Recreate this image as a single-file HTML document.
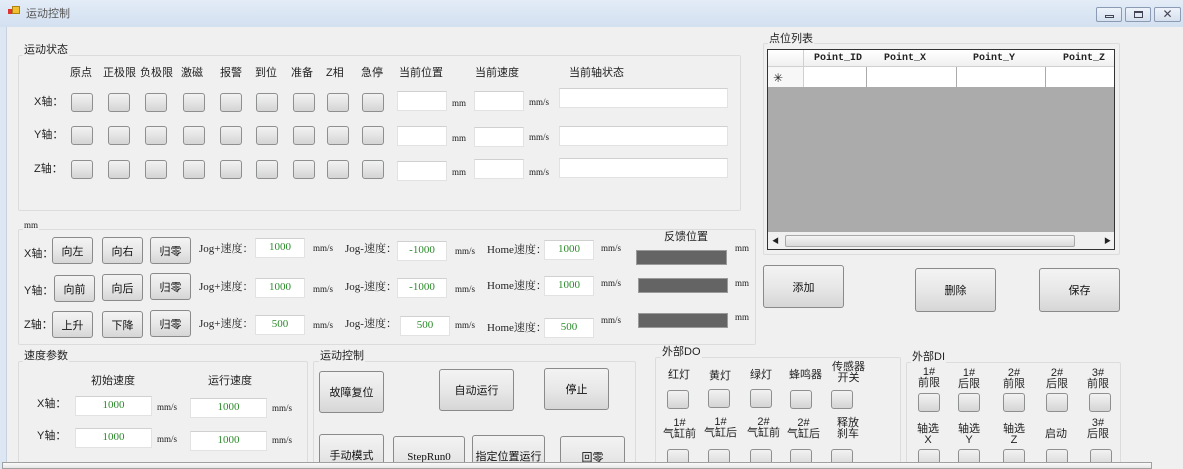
<!DOCTYPE html>
<html><head><meta charset="utf-8">
<style>
*{margin:0;padding:0;box-sizing:border-box}
html{width:1183px;height:469px;overflow:hidden}
body{width:1183px;height:469px;overflow:hidden;background:#f0f0f0;position:relative;font-family:"Liberation Serif","Noto Serif CJK SC","Noto Sans CJK SC",serif;font-size:11px;color:#222}
.a{position:absolute;white-space:nowrap;line-height:12px}
.cj{font-family:"Liberation Sans","Noto Sans CJK SC",sans-serif;font-size:11px}
.sb{position:absolute;width:22px;height:19px;border:1px solid #8e8f8f;border-radius:3px;background:linear-gradient(#f2f2f2,#e4e4e4 50%,#d4d4d4)}
.bt{position:absolute;border:1px solid #8a8a8a;border-radius:3px;background:linear-gradient(#f3f3f3,#e8e8e8 50%,#d6d6d6);display:flex;align-items:center;justify-content:center;font-family:"Liberation Sans","Noto Sans CJK SC",sans-serif;font-size:11px;color:#111}
.tb{position:absolute;background:#fff;border:1px solid #e2e2e2;border-top-color:#d0d0d0;height:20px;color:#2a8a2a;text-align:center;line-height:16px;font-size:11px}
.gb{position:absolute;border:1px solid #dcdcdc;border-radius:2px}
.gl{position:absolute;background:#f0f0f0;padding:0 1px;font-family:"Liberation Sans","Noto Sans CJK SC",sans-serif;font-size:11px;line-height:12px}
.bar{position:absolute;background:#646464;border:1px solid #9a9a9a;height:15px}
.u{font-size:9px}
.c2{text-align:center;line-height:11px}
</style></head><body>
<div style="position:absolute;left:0;top:0;width:1183px;height:27px;background:linear-gradient(#e3ecf7,#d3e0f0)"></div>
<div style="position:absolute;left:8px;top:9px;width:6px;height:5px;background:#d33"></div>
<div style="position:absolute;left:12px;top:6px;width:8px;height:8px;background:#f0c030;border:1px solid #b08010"></div>
<div class="a cj" style="left:26px;top:8px;color:#555;font-size:11px">运动控制</div>
<div style="position:absolute;left:1096px;top:7px;width:26px;height:15px;border:1px solid #8b9bb4;border-radius:2px;background:linear-gradient(#eef3fa,#d6e0ee)"><div style="position:absolute;left:8px;top:7px;width:9px;height:3px;border:1px solid #445"></div></div>
<div style="position:absolute;left:1125px;top:7px;width:26px;height:15px;border:1px solid #8b9bb4;border-radius:2px;background:linear-gradient(#eef3fa,#d6e0ee)"><div style="position:absolute;left:8px;top:3px;width:9px;height:7px;border:1px solid #445;border-top-width:2px"></div></div>
<div style="position:absolute;left:1154px;top:7px;width:27px;height:15px;border:1px solid #8b9bb4;border-radius:2px;background:linear-gradient(#eef3fa,#d6e0ee);text-align:center;line-height:13px;font-size:12px;color:#445;font-family:'DejaVu Sans'">✕</div>
<div style="position:absolute;left:0;top:27px;width:6px;height:442px;background:#dde7f3"></div>
<div style="position:absolute;left:6px;top:27px;width:1px;height:442px;background:#c8d2de"></div>

<div class="gb" style="left:18px;top:55px;width:723px;height:156px"></div>
<div class="gl" style="left:23px;top:44px">运动状态</div>
<div class="a cj" style="left:70px;top:67px">原点</div>
<div class="a cj" style="left:103px;top:67px">正极限</div>
<div class="a cj" style="left:140px;top:67px">负极限</div>
<div class="a cj" style="left:181px;top:67px">激磁</div>
<div class="a cj" style="left:220px;top:67px">报警</div>
<div class="a cj" style="left:255px;top:67px">到位</div>
<div class="a cj" style="left:291px;top:67px">准备</div>
<div class="a cj" style="left:326px;top:67px">Z相</div>
<div class="a cj" style="left:361px;top:67px">急停</div>
<div class="a cj" style="left:399px;top:67px">当前位置</div>
<div class="a cj" style="left:475px;top:67px">当前速度</div>
<div class="a cj" style="left:569px;top:67px">当前轴状态</div>
<div class="a cj" style="left:34px;top:96px">X轴：</div>
<div class="a cj" style="left:34px;top:129px">Y轴：</div>
<div class="a cj" style="left:34px;top:163px">Z轴：</div>

<div class="sb" style="left:71px;top:93px"></div><div class="sb" style="left:108px;top:93px"></div><div class="sb" style="left:145px;top:93px"></div><div class="sb" style="left:183px;top:93px"></div><div class="sb" style="left:220px;top:93px"></div><div class="sb" style="left:256px;top:93px"></div><div class="sb" style="left:293px;top:93px"></div><div class="sb" style="left:327px;top:93px"></div><div class="sb" style="left:362px;top:93px"></div>
<div class="sb" style="left:71px;top:126px"></div><div class="sb" style="left:108px;top:126px"></div><div class="sb" style="left:145px;top:126px"></div><div class="sb" style="left:183px;top:126px"></div><div class="sb" style="left:220px;top:126px"></div><div class="sb" style="left:256px;top:126px"></div><div class="sb" style="left:293px;top:126px"></div><div class="sb" style="left:327px;top:126px"></div><div class="sb" style="left:362px;top:126px"></div>
<div class="sb" style="left:71px;top:160px"></div><div class="sb" style="left:108px;top:160px"></div><div class="sb" style="left:145px;top:160px"></div><div class="sb" style="left:183px;top:160px"></div><div class="sb" style="left:220px;top:160px"></div><div class="sb" style="left:256px;top:160px"></div><div class="sb" style="left:293px;top:160px"></div><div class="sb" style="left:327px;top:160px"></div><div class="sb" style="left:362px;top:160px"></div>

<div class="tb" style="left:397px;top:91px;width:50px"></div><div class="a u" style="left:452px;top:97px">mm</div>
<div class="tb" style="left:474px;top:91px;width:50px"></div><div class="a u" style="left:529px;top:96px">mm/s</div>
<div class="tb" style="left:559px;top:88px;width:169px"></div>
<div class="tb" style="left:397px;top:126px;width:50px"></div><div class="a u" style="left:452px;top:132px">mm</div>
<div class="tb" style="left:474px;top:127px;width:50px"></div><div class="a u" style="left:529px;top:131px">mm/s</div>
<div class="tb" style="left:559px;top:126px;width:169px"></div>
<div class="tb" style="left:397px;top:161px;width:50px"></div><div class="a u" style="left:452px;top:166px">mm</div>
<div class="tb" style="left:474px;top:159px;width:50px"></div><div class="a u" style="left:529px;top:166px">mm/s</div>
<div class="tb" style="left:559px;top:158px;width:169px"></div>

<div class="gb" style="left:18px;top:229px;width:738px;height:116px"></div>
<div class="gl u" style="left:23px;top:219px;font-family:'Liberation Serif',serif;font-size:9px">mm</div>
<div class="a cj" style="left:24px;top:248px">X轴：</div>
<div class="a cj" style="left:24px;top:285px">Y轴：</div>
<div class="a cj" style="left:24px;top:319px">Z轴：</div>
<div class="bt" style="left:52px;top:237px;width:41px;height:27px">向左</div>
<div class="bt" style="left:102px;top:237px;width:41px;height:27px">向右</div>
<div class="bt" style="left:150px;top:237px;width:41px;height:27px">归零</div>
<div class="bt" style="left:54px;top:275px;width:41px;height:27px">向前</div>
<div class="bt" style="left:102px;top:274px;width:41px;height:27px">向后</div>
<div class="bt" style="left:150px;top:273px;width:41px;height:27px">归零</div>
<div class="bt" style="left:52px;top:311px;width:41px;height:27px">上升</div>
<div class="bt" style="left:102px;top:311px;width:41px;height:27px">下降</div>
<div class="bt" style="left:150px;top:310px;width:41px;height:27px">归零</div>

<div class="a" style="left:199px;top:243px">Jog+速度：</div><div class="tb" style="left:255px;top:238px;width:50px">1000</div><div class="a u" style="left:313px;top:242px">mm/s</div>
<div class="a" style="left:199px;top:281px">Jog+速度：</div><div class="tb" style="left:255px;top:278px;width:50px">1000</div><div class="a u" style="left:313px;top:283px">mm/s</div>
<div class="a" style="left:199px;top:318px">Jog+速度：</div><div class="tb" style="left:255px;top:315px;width:50px">500</div><div class="a u" style="left:313px;top:319px">mm/s</div>

<div class="a" style="left:345px;top:243px">Jog-速度：</div><div class="tb" style="left:397px;top:241px;width:50px">-1000</div><div class="a u" style="left:455px;top:245px">mm/s</div>
<div class="a" style="left:345px;top:281px">Jog-速度：</div><div class="tb" style="left:397px;top:278px;width:50px">-1000</div><div class="a u" style="left:455px;top:283px">mm/s</div>
<div class="a" style="left:345px;top:318px">Jog-速度：</div><div class="tb" style="left:400px;top:316px;width:50px">500</div><div class="a u" style="left:455px;top:319px">mm/s</div>

<div class="a" style="left:487px;top:244px">Home速度：</div><div class="tb" style="left:544px;top:240px;width:50px">1000</div><div class="a u" style="left:601px;top:242px">mm/s</div>
<div class="a" style="left:487px;top:280px">Home速度：</div><div class="tb" style="left:544px;top:276px;width:50px">1000</div><div class="a u" style="left:601px;top:277px">mm/s</div>
<div class="a" style="left:487px;top:322px">Home速度：</div><div class="tb" style="left:544px;top:318px;width:50px">500</div><div class="a u" style="left:601px;top:314px">mm/s</div>

<div class="a cj" style="left:664px;top:231px">反馈位置</div>
<div class="bar" style="left:636px;top:250px;width:91px"></div><div class="a u" style="left:735px;top:242px">mm</div>
<div class="bar" style="left:638px;top:278px;width:90px"></div><div class="a u" style="left:735px;top:277px">mm</div>
<div class="bar" style="left:638px;top:313px;width:90px"></div><div class="a u" style="left:735px;top:311px">mm</div>

<div class="gb" style="left:18px;top:361px;width:290px;height:110px"></div>
<div class="gl" style="left:23px;top:350px">速度参数</div>
<div class="a cj" style="left:91px;top:375px">初始速度</div>
<div class="a cj" style="left:208px;top:375px">运行速度</div>
<div class="a cj" style="left:37px;top:398px">X轴：</div>
<div class="a cj" style="left:37px;top:430px">Y轴：</div>
<div class="tb" style="left:75px;top:396px;width:77px">1000</div><div class="a u" style="left:157px;top:401px">mm/s</div>
<div class="tb" style="left:190px;top:398px;width:77px">1000</div><div class="a u" style="left:272px;top:402px">mm/s</div>
<div class="tb" style="left:75px;top:428px;width:77px">1000</div><div class="a u" style="left:157px;top:433px">mm/s</div>
<div class="tb" style="left:190px;top:431px;width:77px">1000</div><div class="a u" style="left:272px;top:434px">mm/s</div>

<div class="gb" style="left:313px;top:361px;width:323px;height:110px"></div>
<div class="gl" style="left:319px;top:350px">运动控制</div>
<div class="bt" style="left:319px;top:371px;width:65px;height:42px">故障复位</div>
<div class="bt" style="left:439px;top:369px;width:75px;height:42px">自动运行</div>
<div class="bt" style="left:544px;top:368px;width:65px;height:42px">停止</div>
<div class="bt" style="left:319px;top:434px;width:65px;height:42px">手动模式</div>
<div class="bt" style="left:393px;top:436px;width:72px;height:42px;font-family:'Liberation Serif',serif">StepRun0</div>
<div class="bt" style="left:472px;top:435px;width:73px;height:42px">指定位置运行</div>
<div class="bt" style="left:560px;top:436px;width:65px;height:42px">回零</div>

<div class="gb" style="left:655px;top:357px;width:246px;height:114px"></div>
<div class="gl" style="left:661px;top:346px">外部DO</div>
<div class="a cj" style="left:668px;top:369px">红灯</div>
<div class="a cj" style="left:709px;top:370px">黄灯</div>
<div class="a cj" style="left:750px;top:369px">绿灯</div>
<div class="a cj" style="left:789px;top:369px">蜂鸣器</div>
<div class="a cj c2" style="left:832px;top:362px">传感器<br>开关</div>
<div class="sb" style="left:667px;top:390px"></div><div class="sb" style="left:708px;top:389px"></div><div class="sb" style="left:750px;top:389px"></div><div class="sb" style="left:790px;top:390px"></div><div class="sb" style="left:831px;top:390px"></div>
<div class="a cj c2" style="left:663px;top:418px">1#<br>气缸前</div>
<div class="a cj c2" style="left:704px;top:417px">1#<br>气缸后</div>
<div class="a cj c2" style="left:747px;top:417px">2#<br>气缸前</div>
<div class="a cj c2" style="left:787px;top:418px">2#<br>气缸后</div>
<div class="a cj c2" style="left:837px;top:418px">释放<br>刹车</div>
<div class="sb" style="left:667px;top:449px"></div><div class="sb" style="left:708px;top:449px"></div><div class="sb" style="left:750px;top:449px"></div><div class="sb" style="left:790px;top:449px"></div><div class="sb" style="left:831px;top:449px"></div>

<div class="gb" style="left:906px;top:362px;width:215px;height:109px"></div>
<div class="gl" style="left:911px;top:351px">外部DI</div>
<div class="a cj c2" style="left:918px;top:367px">1#<br>前限</div>
<div class="a cj c2" style="left:958px;top:368px">1#<br>后限</div>
<div class="a cj c2" style="left:1003px;top:368px">2#<br>前限</div>
<div class="a cj c2" style="left:1046px;top:368px">2#<br>后限</div>
<div class="a cj c2" style="left:1087px;top:368px">3#<br>前限</div>
<div class="sb" style="left:918px;top:393px"></div><div class="sb" style="left:958px;top:393px"></div><div class="sb" style="left:1003px;top:393px"></div><div class="sb" style="left:1046px;top:393px"></div><div class="sb" style="left:1089px;top:393px"></div>
<div class="a cj c2" style="left:917px;top:424px">轴选<br>X</div>
<div class="a cj c2" style="left:958px;top:424px">轴选<br>Y</div>
<div class="a cj c2" style="left:1003px;top:424px">轴选<br>Z</div>
<div class="a cj" style="left:1045px;top:428px">启动</div>
<div class="a cj c2" style="left:1087px;top:418px">3#<br>后限</div>
<div class="sb" style="left:918px;top:449px"></div><div class="sb" style="left:958px;top:449px"></div><div class="sb" style="left:1003px;top:449px"></div><div class="sb" style="left:1046px;top:449px"></div><div class="sb" style="left:1090px;top:449px"></div>

<div class="gb" style="left:763px;top:43px;width:357px;height:212px"></div>
<div class="gl" style="left:768px;top:33px">点位列表</div>
<div style="position:absolute;left:767px;top:49px;width:348px;height:201px;border:1px solid #333;background:#ababab"></div>
<div style="position:absolute;left:768px;top:50px;width:346px;height:17px;background:linear-gradient(#fff,#f0f0f0);border-bottom:1px solid #d0d0d0"></div>
<div style="position:absolute;left:803px;top:50px;width:1px;height:37px;background:#d0d0d0"></div>
<div class="a" style="left:814px;top:53px;font-family:'Liberation Mono',monospace;font-size:10px;font-weight:bold">Point_ID</div>
<div class="a" style="left:884px;top:53px;font-family:'Liberation Mono',monospace;font-size:10px;font-weight:bold">Point_X</div>
<div class="a" style="left:973px;top:53px;font-family:'Liberation Mono',monospace;font-size:10px;font-weight:bold">Point_Y</div>
<div class="a" style="left:1063px;top:53px;font-family:'Liberation Mono',monospace;font-size:10px;font-weight:bold">Point_Z</div>
<div style="position:absolute;left:768px;top:67px;width:35px;height:20px;background:#f7f7f7"></div>
<div class="a" style="left:773px;top:72px;font-size:12px;font-family:'DejaVu Sans'">✳</div>
<div style="position:absolute;left:804px;top:67px;width:310px;height:20px;background:#fff"></div>
<div style="position:absolute;left:866px;top:67px;width:1px;height:20px;background:#aaa"></div>
<div style="position:absolute;left:956px;top:67px;width:1px;height:20px;background:#aaa"></div>
<div style="position:absolute;left:1045px;top:67px;width:1px;height:20px;background:#aaa"></div>
<div style="position:absolute;left:768px;top:232px;width:346px;height:17px;background:#f0f0f0"></div>
<div style="position:absolute;left:785px;top:235px;width:290px;height:12px;border:1px solid #a8a8a8;border-radius:2px;background:linear-gradient(#f4f4f4,#dadada)"></div>
<div class="a" style="left:772px;top:235px;font-size:7px">◀</div>
<div class="a" style="left:1104px;top:235px;font-size:7px">▶</div>
<div class="bt" style="left:763px;top:265px;width:81px;height:43px">添加</div>
<div class="bt" style="left:915px;top:268px;width:81px;height:44px">删除</div>
<div class="bt" style="left:1039px;top:268px;width:81px;height:44px">保存</div>

<div style="position:absolute;left:2px;top:462px;width:1150px;height:7px;border:1px solid #a0a0a0;background:linear-gradient(#fafafa,#e6e6e6);z-index:5"></div>
<div style="position:absolute;left:1152px;top:462px;width:31px;height:7px;background:#f0f0f0;z-index:5"></div>
</body></html>
